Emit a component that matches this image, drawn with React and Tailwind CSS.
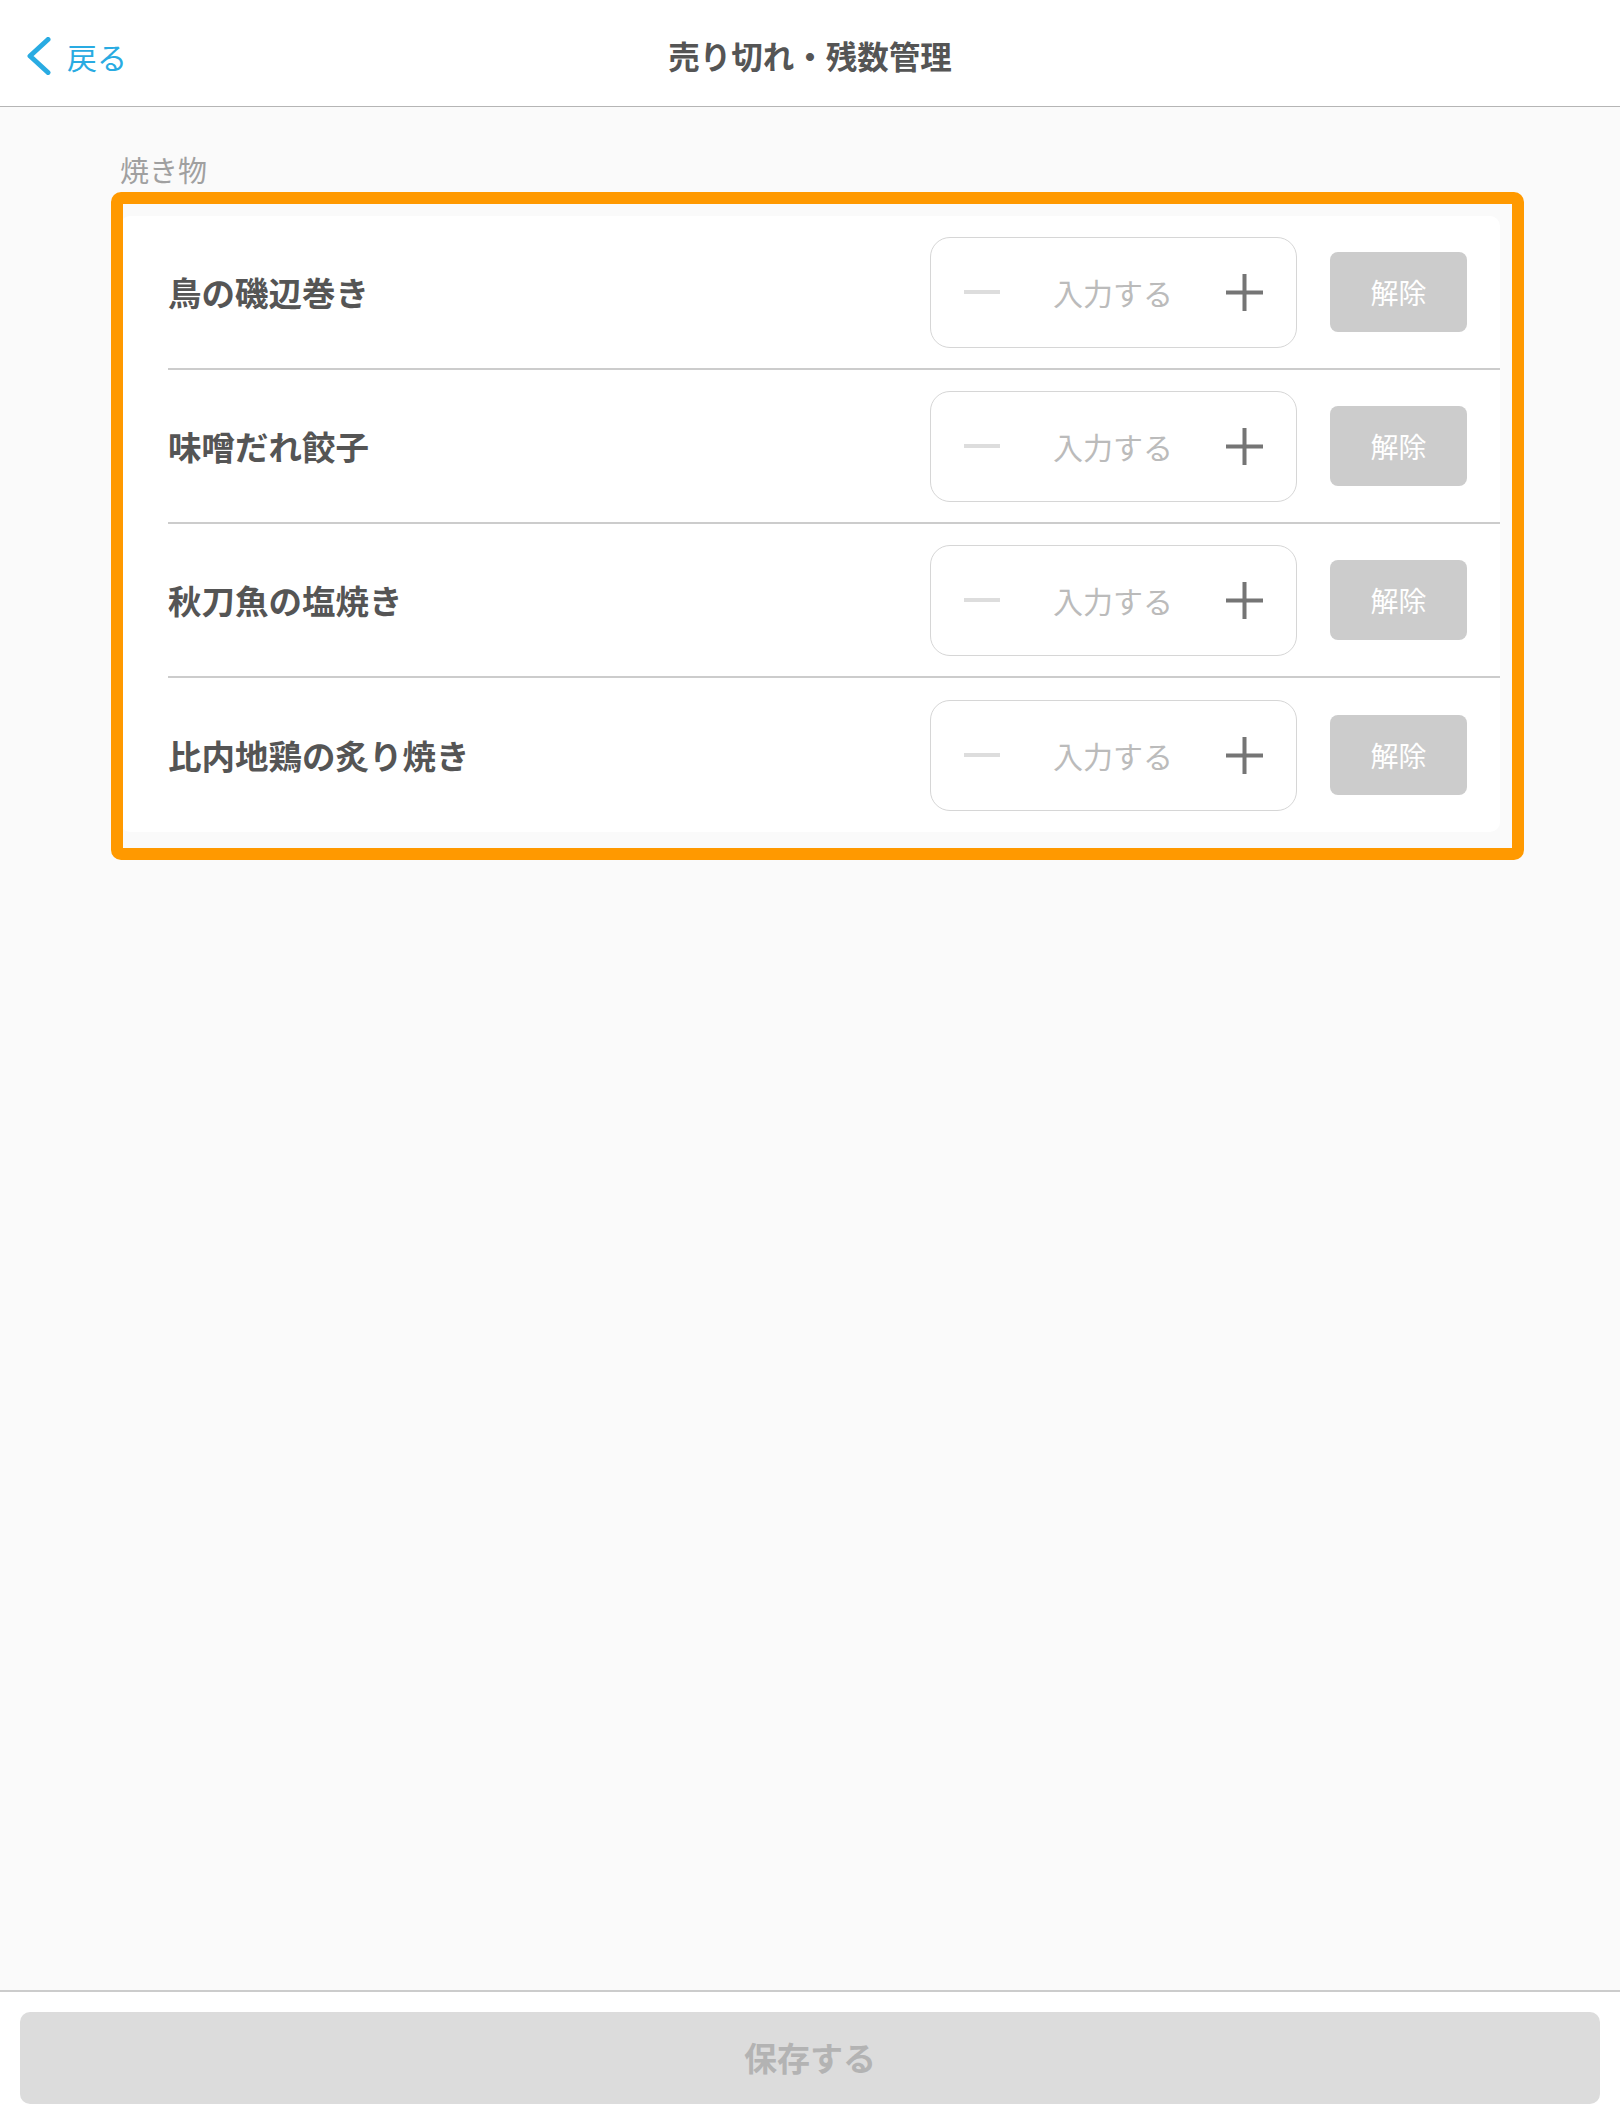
import React from 'react'

const items = ['鳥の磯辺巻き', '味噌だれ餃子', '秋刀魚の塩焼き', '比内地鶏の炙り焼き']

function Stepper(){
  return (
    <div className="w-[367px] h-[111px] shrink-0 flex items-center px-[33px] border border-[#d6d6d6] rounded-[20px] bg-white">
      <div className="w-[36px] h-[4px] bg-[#dddddd]" />
      <div className="flex-1 text-center text-[30px] leading-none text-[#bbbbbb]">入力する</div>
      <svg width="37" height="37" viewBox="0 0 37 37">
        <rect x="0" y="16.5" width="37" height="4" fill="#757575" />
        <rect x="16.5" y="0" width="4" height="37" fill="#757575" />
      </svg>
    </div>
  )
}

function Row({ name, last }){
  return (
    <div className={'ml-[48px] h-[154px] flex items-center pr-[33px] ' + (last ? 'h-[152px]' : 'border-b-2 border-[#cccccc]')}>
      <div className="flex-1 text-[33.5px] font-bold text-[#555555] leading-none">{name}</div>
      <Stepper />
      <button className="ml-[33px] w-[137px] h-[80px] rounded-[8px] bg-[#cccccc] text-white text-[28px] leading-none">解除</button>
    </div>
  )
}

export default function App(){
  return (
    <div className="h-screen min-h-[2126px] flex flex-col bg-[#fafafa]" style={{ fontFamily: '"Noto Sans CJK JP", "Noto Sans", sans-serif' }}>
      <header className="h-[107px] shrink-0 bg-white border-b border-[#b5b5b5] grid grid-cols-[1fr_auto_1fr] items-center pt-[6px]">
        <div className="flex items-center pl-[27px] gap-[15px] text-[#29abe2]">
          <svg width="25" height="38" viewBox="0 0 25 38">
            <polyline points="21,2.5 3,19 21,35.5" fill="none" stroke="#29abe2" strokeWidth="5" strokeLinecap="round" strokeLinejoin="round" />
          </svg>
          <span className="text-[30px] leading-none">戻る</span>
        </div>
        <h1 className="text-[31.5px] font-bold text-[#555555] leading-none">売り切れ・残数管理</h1>
        <div />
      </header>

      <main className="flex-1 px-[120px] pt-[42px]">
        <div className="text-[29px] leading-[40px] text-[#a0a0a0]">焼き物</div>
        <div className="relative mt-[27px] bg-white rounded-[10px]">
          {items.map((n, i) => <Row key={n} name={n} last={i === items.length - 1} />)}
          <div className="absolute -left-[9px] -right-[24px] -top-[24px] -bottom-[28px] border-[12px] border-[#ff9900] rounded-[10px] pointer-events-none" />
        </div>
      </main>

      <footer className="shrink-0 bg-white border-t-2 border-[#cccccc] px-[20px] pt-[20px] pb-[22px]">
        <button className="w-full h-[92px] rounded-[10px] bg-[#dcdcdc] text-[33px] font-bold text-[#b3b3b3]">保存する</button>
      </footer>
    </div>
  )
}
